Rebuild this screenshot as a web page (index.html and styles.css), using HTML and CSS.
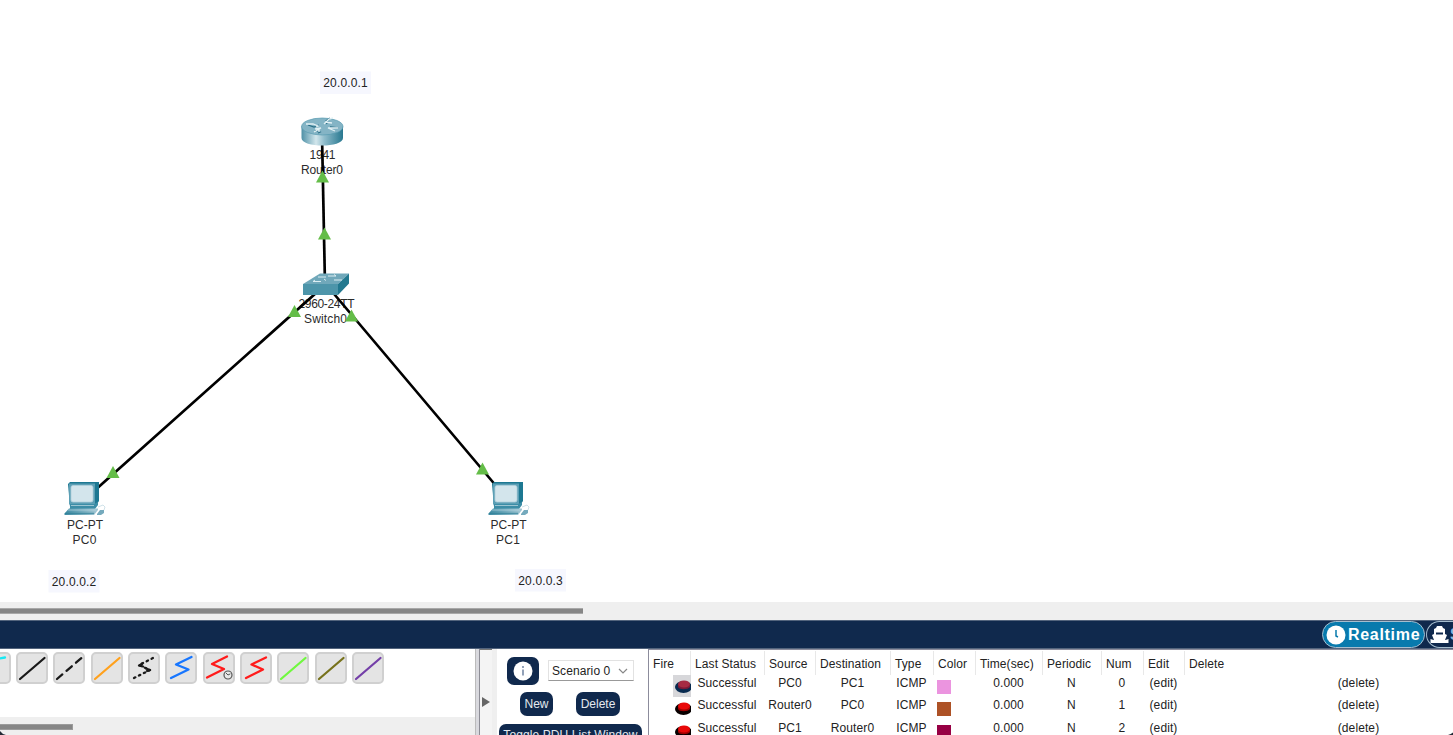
FILE: index.html
```html
<!DOCTYPE html>
<html lang="en">
<head>
<meta charset="utf-8">
<title>Network topology</title>
<link rel="stylesheet" href="styles.css">
</head>
<body>
<main class="app">
  <section class="workspace">
    <svg class="topology" viewBox="0 0 1453 601">
      <defs>
        <linearGradient id="side"><stop offset="0" stop-color="#4f91a7"/><stop offset=".35" stop-color="#d2e6ec"/><stop offset=".55" stop-color="#8fbccb"/><stop offset="1" stop-color="#287890"/></linearGradient>
        <linearGradient id="base"><stop offset="0" stop-color="#3e8ca4"/><stop offset="1" stop-color="#a5c8d5"/></linearGradient>
        <g id="pc">
          <path d="M3 2l2-2h29v19l-4 6H5z" fill="#1d7892"/>
          <path d="M4 1.500h26v21H4z" fill="#5c9fb5"/>
          <rect x="6" y="3.500" width="22" height="16.500" rx="2" fill="#d3e5ec" stroke="#b3d0dc" stroke-width=".8"/>
          <path d="M5 22h24l4-2v3l-3 4H5z" fill="#3c8da6"/><path d="M6 23.500h23" stroke="#9bc4d1"/>
          <path d="M4 26.500h29v1.500l-4 5H-.500v-1.500z" fill="url(#base)"/><path d="M0 31.300h29" stroke="#2b7c94" stroke-width=".8"/><path d="M3 28h28" stroke="#bcd8e2" stroke-width=".7"/>
          <path d="M32 32l3-4h4v3l-3 2h-4z" fill="#75aabd"/><path d="M33 25l5-2 2 2-1 3" fill="none" stroke="#cfe2e9"/>
        </g>
        <path id="status" d="M0-6.500L6.500 5.500H-6.500z" fill="#64bd48"/>
      </defs>
      <g fill="#2b2b2b" class="device-label">
        <text x="322.500" y="159" textLength="26">1941</text><text x="322" y="174" textLength="42">Router0</text>
        <text x="326.500" y="308" textLength="56">2960-24TT</text><text x="325.500" y="323" textLength="43">Switch0</text>
      </g>
      <path d="M322 135L325 285" fill="none" stroke="#000" stroke-width="2.700"/>
      <path d="M325 285L84 500M326.500 285L508 500" fill="none" stroke="#000" stroke-width="2.700"/>
      <g>
        <path d="M301.500 126v12c0 10 41.500 10 41.500 0v-12z" fill="url(#side)"/>
        <ellipse cx="322.300" cy="126.500" rx="20.700" ry="8.500" fill="#84b4c5" stroke="#589bb0" stroke-width=".7"/>
        <path d="M308 125l6 2 5-2M327 124l-1-3 4-3M330 127l8 1M315 130l5 2-2 1" fill="none" stroke="#286e86" stroke-width="1.300"/>
        <path d="M306 124l7 0 5 2-2 1M324 124l5-5 4-1M325 122l7 1M338 128h-10l7 3M314 132l7-4-6 1M319 129v3" fill="none" stroke="#e1f0f4" stroke-width="1.300"/>
      </g>
      <g>
        <path d="M303 284l17-10.500h29l-11 10.500z" fill="#70a8ba"/><path d="M303 284h35v11h-35z" fill="#4d95aa"/><path d="M338 284l11-10.500v10L338 295z" fill="#22788f"/>
        <path d="M318 277h8M328 276h8l-2-1.500M313 281.500h8M313 281.500l2-1.500M342 280h-8M326 280.500l-2-1.500" fill="none" stroke="#dceef3" stroke-width="1"/>
      </g>
      <use href="#pc" x="65" y="482"/><use href="#pc" x="489" y="482"/>
      <use href="#status" x="322.500" y="177"/><use href="#status" x="324.500" y="234"/><use href="#status" x="294.500" y="311.500"/><use href="#status" x="351.500" y="316"/><use href="#status" x="113" y="472.500"/><use href="#status" x="482.500" y="469"/>
      <g fill="#2b2b2b" class="device-label">
        <text x="85" y="528.500" textLength="36">PC-PT</text><text x="84.500" y="543.500" textLength="24">PC0</text>
        <text x="508.500" y="528.500" textLength="36">PC-PT</text><text x="508" y="543.500" textLength="24">PC1</text>
      </g>
      <g fill="#f6f7fe"><path d="M320 71.500h51v22.500h-51zM48.500 570h51v22.500h-51zM515 569h51v22.500h-51z"/></g>
      <g fill="#222" class="device-label"><text x="345.500" y="87" textLength="44.500">20.0.0.1</text><text x="74" y="585.500" textLength="44.500">20.0.0.2</text><text x="540.500" y="584.500" textLength="44.500">20.0.0.3</text></g>
    </svg>
  </section>
  <div class="scrollbar"><span class="thumb"></span></div>
  <nav class="modebar">
    <div class="mode active"><svg width="20" height="20"><circle cx="10" cy="10" r="9.500" fill="#fff"/><path d="M10 5v6l2 1" fill="none" stroke="#087aad" stroke-width="1.500"/></svg><span>Realtime</span></div>
    <div class="mode"><svg width="19" height="20" viewBox="0 0 19 20"><path d="M6 3l1-2h5l1 2 2 1v5l2 1-2 5H4l-2-5 2-1V4z" fill="#fff"/><path d="M6 8.500h7" stroke="#10294d" stroke-width="2"/><path d="M.500 14l3 1 3-1 3 1 3-1 3 1 3-1v4H.500z" fill="#fff"/></svg><span>Simulation</span></div>
  </nav>
  <section class="bottom">
    <div class="connections">
      <div class="tools">
        <div class="tool"><svg viewBox="0 0 32 32"><path d="M4 27L18 7l8-1.500" stroke="#19e8f2"/></svg></div>
        <div class="tool"><svg viewBox="0 0 32 32"><path d="M4 27L28.500 6" stroke="#191919"/></svg></div>
        <div class="tool"><svg viewBox="0 0 32 32"><path d="M4 27L28.500 6" stroke="#191919" stroke-dasharray="7 5.500"/></svg></div>
        <div class="tool"><svg viewBox="0 0 32 32"><path d="M4 27L28.500 6" stroke="#ffa11d"/></svg></div>
        <div class="tool"><svg viewBox="0 0 32 32"><path d="M6 26L22 18L11 13L27 5" stroke="#191919" stroke-dasharray="1.500 4"/><path d="M18 16.500l4 1.500-3 1M14 12l-3 1.500 4 1" stroke="#191919"/></svg></div>
        <div class="tool"><svg viewBox="0 0 32 32"><path d="M6 26L23.500 17.500L11 12.500L26.500 5" stroke="#1776ff"/></svg></div>
        <div class="tool"><svg viewBox="0 0 32 32"><path d="M4 25.500L21 17L9 12L24 4.500" stroke="#ff1b1b"/><circle cx="25" cy="23" r="4" fill="#e8e8e8" stroke="#555" stroke-width="1.200"/><path d="M23 21l2 2 2-1" stroke="#555" stroke-width="1"/></svg></div>
        <div class="tool"><svg viewBox="0 0 32 32"><path d="M6 26L23 17.500L11.500 12.500L26 5.500" stroke="#ff1b1b"/></svg></div>
        <div class="tool"><svg viewBox="0 0 32 32"><path d="M4 27L28.500 6" stroke="#70f83f"/></svg></div>
        <div class="tool"><svg viewBox="0 0 32 32"><path d="M4 27L28.500 6" stroke="#77721c"/></svg></div>
        <div class="tool"><svg viewBox="0 0 32 32"><path d="M4 27L28.500 6" stroke="#743fa8"/></svg></div>
      </div>
      <div class="tool-scroll"><span></span></div>
    </div>
    <div class="splitter"></div>
    <div class="grip"><i></i></div>
    <div class="gutter"></div>
    <div class="scenarios">
      <div class="scenario-row">
        <div class="info"><svg width="20" height="20"><circle cx="10" cy="10" r="9.500" fill="#fff"/><path d="M10 5v2M10 8.500v6" stroke="#788ba7" stroke-width="1.600"/></svg></div>
        <div class="select"><span>Scenario 0</span><svg width="10" height="6"><path d="M1 1l4 4 4-4" fill="none" stroke="#888" stroke-width="1.200"/></svg></div>
      </div>
      <div class="actions"><button class="new">New</button><button class="delete">Delete</button></div>
      <button class="toggle">Toggle PDU List Window</button>
    </div>
    <div class="pdu-list">
      <div class="row head"><span>Fire</span><span>Last Status</span><span>Source</span><span>Destination</span><span>Type</span><span>Color</span><span>Time(sec)</span><span>Periodic</span><span>Num</span><span>Edit</span><span>Delete</span></div>
      <div class="row"><span class="fire selected"><svg viewBox="0 0 18 22"><ellipse cx="10.500" cy="12" rx="8.500" ry="6" fill="#082b50"/><path d="M5 9v3c1 3 10 3 12 0V9z" fill="#7b1836"/><ellipse cx="11" cy="9" rx="6" ry="3.500" fill="#a62a43"/></svg></span><span>Successful</span><span>PC0</span><span>PC1</span><span>ICMP</span><span class="color"><i class="pink"></i></span><span>0.000</span><span>N</span><span>0</span><span>(edit)</span><span>(delete)</span></div>
      <div class="row"><span class="fire"><svg viewBox="0 0 18 22"><ellipse cx="10.500" cy="12" rx="8.500" ry="6" fill="#080000"/><path d="M5 9v3c1 3 10 3 12 0V9z" fill="#a00000"/><ellipse cx="11" cy="9" rx="6" ry="3.500" fill="#e90808"/></svg></span><span>Successful</span><span>Router0</span><span>PC0</span><span>ICMP</span><span class="color"><i class="brown"></i></span><span>0.000</span><span>N</span><span>1</span><span>(edit)</span><span>(delete)</span></div>
      <div class="row"><span class="fire"><svg viewBox="0 0 18 22"><ellipse cx="10.500" cy="12" rx="8.500" ry="6" fill="#080000"/><path d="M5 9v3c1 3 10 3 12 0V9z" fill="#a00000"/><ellipse cx="11" cy="9" rx="6" ry="3.500" fill="#e90808"/></svg></span><span>Successful</span><span>PC1</span><span>Router0</span><span>ICMP</span><span class="color"><i class="maroon"></i></span><span>0.000</span><span>N</span><span>2</span><span>(edit)</span><span>(delete)</span></div>
    </div>
  </section>
  <svg class="corner left" viewBox="0 0 6 4"><path d="M0 0q2 3 6 4H0z" fill="#222b36"/></svg>
  <svg class="corner right" viewBox="0 0 6 4"><path d="M6 1.500Q4 3 1 4h5z" fill="#222b36"/></svg>
</main>
</body>
</html>
```
FILE: styles.css
```css
* { box-sizing: border-box; }
body { margin: 0; overflow: hidden; background: #fff; font: 12px "Liberation Sans", Arial, sans-serif; color: #222; }
.app { position: relative; display: grid; grid-template-rows: 602px 18px 29px 86px; width: 1453px; height: 735px; overflow: hidden; }
.corner { position: absolute; bottom: 0; width: 6px; height: 4px; }
.left { left: 0; }
.right { right: 0; }
.workspace { overflow: hidden; }
.topology { display: block; width: 1453px; height: 601px; }
.device-label { font-size: 12px; text-anchor: middle; }
.scrollbar { background: #efefef; padding-top: 6px; }
.thumb { display: block; width: 583px; height: 6px; background: #868686; border-top: 1px solid #a8a8a8; border-bottom: 1px solid #a8a8a8; }
.modebar { display: flex; justify-content: flex-end; gap: 2px; background: #10294d; border-top: 1px solid #53647d; border-bottom: 1px solid #53647d; overflow: hidden; }
.mode { flex: none; display: flex; align-items: center; gap: 1px; height: 27px; width: 27px; border: 1px solid #a6bdce; border-right: 0; border-radius: 14px 0 0 14px; padding-left: 3px; color: #8ab7df; font-size: 16px; font-weight: bold; overflow: hidden; }
.mode.active { gap: 2px; width: 103px; border-right: 1px solid #a6bdce; border-radius: 14px; background: #087aad; color: #fff; letter-spacing: .7px; margin-right: -1px; }
.mode svg { flex: none; }
.bottom { display: grid; grid-template-columns: 475px 5px 12px 5px 151px 805px; overflow: hidden; }
.connections { display: grid; grid-template-rows: 68px 18px; overflow: hidden; }
.tools { display: flex; gap: 5.350px; margin-left: -21.500px; padding-top: 3px; }
.tool { flex: none; width: 32px; height: 32px; background: #e4e4e4; border: 2px solid #d0d0d0; border-radius: 5px; }
.tool svg { display: block; width: 32px; height: 32px; margin: -2px; fill: none; stroke-width: 2.300; stroke-linecap: round; stroke-linejoin: round; }
.tool-scroll { background: #efefef; padding-top: 7px; }
.tool-scroll span { display: block; width: 73px; height: 6px; background: #868686; border: 1px solid #9b9b9b; border-left: 0; }
.splitter { background: #d9d9de; border-left: 1px solid #bbb; border-right: 1px solid #8d8d96; }
.grip { display: grid; place-items: center start; padding: 19px 0 0 2px; background: #f4f4f4; border-top: 1px solid #777; }
.grip i { margin-top: -7px; border-left: 8px solid #666; border-top: 5px solid transparent; border-bottom: 5px solid transparent; }
.gutter { background: #efefef; }
.scenarios { padding: 7px 5px 0 2px; overflow: hidden; }
.scenario-row { display: flex; align-items: center; gap: 9px; padding-left: 8px; height: 29px; }
.info { flex: none; width: 32px; height: 28px; display: grid; place-items: center; border-radius: 7px; background: #10294d; }
.select { width: 86px; height: 21px; display: flex; align-items: center; justify-content: space-between; padding: 0 5px 0 3px; border: 1px solid #e2e2e2; border-bottom-color: #999; letter-spacing: .1px; white-space: nowrap; }
.actions { display: flex; gap: 23px; padding: 7px 0 0 21px; }
button { display: block; padding: 0; border: 0; border-radius: 7px; background: #10294d; color: #e4e9ef; font: 12px "Liberation Sans", Arial, sans-serif; }
.new { width: 33px; height: 24px; }
.delete { width: 44px; height: 24px; }
.toggle { width: 143px; height: 22px; margin-top: 8px; white-space: nowrap; letter-spacing: .1px; }
.pdu-list { border-top: 1px solid #8c8c9c; border-left: 1px solid #8c8c9c; padding-top: 1px; }
.row { display: grid; grid-template-columns: 42px 74px 51px 75px 43px 42px 67px 59px 42px 41px 349px; width: 885px; height: 22.300px; line-height: 17px; text-align: center; letter-spacing: .1px; }
.row span { overflow: hidden; padding-right: 2px; }
.row:not(.head) span:nth-child(3) { padding-right: 1px; }
.head { height: 24px; line-height: 26px; text-align: left; }
.head span { border-right: 1px solid #e8e8e8; padding-left: 4px; padding-right: 0; white-space: nowrap; }
.row .fire { justify-self: end; width: 18px; height: 22px; padding: 0; }
.fire svg { display: block; width: 18px; height: 22px; }
.selected { background: #d7d7da; }
.row .color { padding: 5px 0 0 3px; }
.color i { display: block; width: 14px; height: 14px; }
.pink { background: #eb94df; }
.brown { background: #ad5226; }
.maroon { background: #970044; }
```
